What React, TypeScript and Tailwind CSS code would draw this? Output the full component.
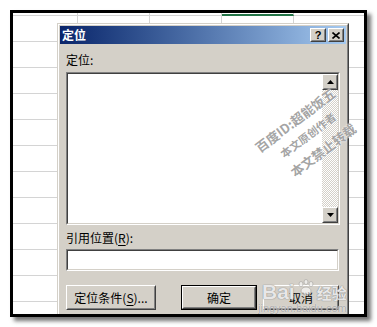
import React from 'react';

const FONT = '"Noto Sans CJK SC", "Noto Sans", sans-serif';

function Raised({ className = '', children }: { className?: string; children?: React.ReactNode }) {
  return (
    <div className={`border border-t-white border-l-white border-b-[#404040] border-r-[#404040] bg-[#d4d0c8] ${className}`}>
      <div className="w-full h-full border border-t-[#d4d0c8] border-l-[#d4d0c8] border-b-[#808080] border-r-[#808080] flex items-center justify-center">
        {children}
      </div>
    </div>
  );
}

function Sunken({ className = '', children }: { className?: string; children?: React.ReactNode }) {
  return (
    <div className={`border border-t-[#808080] border-l-[#808080] border-b-white border-r-white ${className}`}>
      <div className="w-full h-full border border-t-[#404040] border-l-[#404040] border-b-[#d4d0c8] border-r-[#d4d0c8] bg-white flex">
        {children}
      </div>
    </div>
  );
}

function Sheet() {
  const rows = Array.from({ length: 12 });
  const cols = [65, 72, 72, 72, 72];
  return (
    <div className="flex flex-col">
      {rows.map((_, r) => (
        <div key={r} className="flex">
          {cols.map((w, c) => {
            const sel = r === 0 && c === 3;
            return (
              <div
                key={c}
                style={{ width: w }}
                className={`${r === 0 ? 'h-[3px]' : 'h-[26px]'} shrink-0 border-r border-r-[#d4d4d4] ${
                  sel ? 'border-b-2 border-b-[#217346]' : 'border-b border-b-[#d4d4d4]'
                }`}
              />
            );
          })}
        </div>
      ))}
    </div>
  );
}

function Watermark() {
  const mark = 'absolute -translate-x-1/2 -translate-y-1/2 -rotate-[37deg] whitespace-nowrap font-bold leading-none';
  const glow = '[text-shadow:0_0_1px_#fff,0_0_2px_#fff]';
  return (
    <div className="absolute inset-0 pointer-events-none">
      <div className={`${mark} ${glow} left-[282px] top-[107px] text-[13px] text-[#8c8c8c]/80`}>百度ID:超能饭五</div>
      <div className={`${mark} ${glow} left-[295px] top-[122px] text-[11px] text-[#8c8c8c]/80`}>本文原创作者</div>
      <div className={`${mark} ${glow} left-[310px] top-[137px] text-[13px] text-[#8c8c8c]/80`}>本文禁止转载</div>

      <div className="absolute left-[249px] top-[266px] flex items-end gap-[2px]">
        <span className="text-[21px] leading-[22px] font-bold text-white/80 [text-shadow:0_0_1px_#888,0_0_1px_#888]" style={{ fontFamily: '"Liberation Sans", sans-serif' }}>
          Bai
        </span>
        <svg width="18" height="18" viewBox="0 0 18 18" className="mb-[6px] opacity-60">
          <ellipse cx="4" cy="5" rx="2" ry="2.5" fill="#fff" stroke="#999" strokeWidth="0.8" />
          <ellipse cx="9" cy="3" rx="2" ry="2.5" fill="#fff" stroke="#999" strokeWidth="0.8" />
          <ellipse cx="14" cy="5" rx="2" ry="2.5" fill="#fff" stroke="#999" strokeWidth="0.8" />
          <ellipse cx="9" cy="12" rx="5" ry="4" fill="#fff" stroke="#999" strokeWidth="0.8" />
        </svg>
        <span className="text-[15px] leading-[20px] font-bold text-white/80 [text-shadow:0_0_1px_#888,0_0_1px_#888]">经验</span>
      </div>
      <div className="absolute left-[245px] top-[289px] text-[11px] leading-[12px] text-[#999]/80 [text-shadow:0_0_1px_#fff]" style={{ fontFamily: '"Liberation Sans", sans-serif' }}>
        jingyan.baidu.com
      </div>
    </div>
  );
}

function ArrowUp() {
  return (
    <svg width="7" height="4" viewBox="0 0 7 4">
      <path d="M3.5 0 L7 4 L0 4 Z" fill="#000" />
    </svg>
  );
}

function ArrowDown() {
  return (
    <svg width="7" height="4" viewBox="0 0 7 4">
      <path d="M0 0 L7 0 L3.5 4 Z" fill="#000" />
    </svg>
  );
}

export default function App() {
  return (
    <div className="w-[377px] h-[327px] bg-white pt-[10px] pl-[10px]" style={{ fontFamily: FONT }}>
      <div className="relative w-[357px] h-[307px] border-[3px] border-black bg-white overflow-hidden shadow-[4px_4px_4px_rgba(0,0,0,0.55)]">
        <Sheet />

        {/* dialog */}
        <div className="absolute left-[44px] top-[10px] w-[292px] h-[300px] border border-t-[#d4d0c8] border-l-[#d4d0c8] border-b-[#404040] border-r-[#404040] bg-[#d4d0c8]">
          <div className="h-full border border-t-white border-l-white border-b-[#808080] border-r-[#808080] p-px flex flex-col">
            <div className="h-[18px] flex items-center bg-linear-to-r from-[#0a246a] to-[#a6caf0] pl-[2px] pr-[2px]">
              <span className="text-white font-bold text-[12px] leading-[14px]">定位</span>
              <div className="ml-auto flex gap-[2px]">
                <Raised className="w-[16px] h-[14px]">
                  <span className="text-[11px] leading-[11px] font-bold text-black" style={{ fontFamily: '"Liberation Sans", sans-serif' }}>?</span>
                </Raised>
                <Raised className="w-[16px] h-[14px]">
                  <svg width="8" height="7" viewBox="0 0 8 7">
                    <path d="M0.5 0.5 L7.5 6.5 M7.5 0.5 L0.5 6.5" stroke="#000" strokeWidth="1.6" />
                  </svg>
                </Raised>
              </div>
            </div>

            <div className="px-[6px] flex flex-col text-[12px] text-black">
              <div className="mt-[8px] h-[16px] leading-[16px]">定位:</div>
              <Sunken className="mt-[4px] h-[153px]">
                <div className="flex-1" />
                <div className="w-[16px] flex flex-col">
                  <Raised className="h-[16px] shrink-0">
                    <ArrowUp />
                  </Raised>
                  <div className="flex-1 bg-[repeating-conic-gradient(#d4d0c8_0_25%,#ffffff_0_50%)] bg-[length:2px_2px]" />
                  <Raised className="h-[16px] shrink-0">
                    <ArrowDown />
                  </Raised>
                </div>
              </Sunken>
              <div className="mt-[5px] h-[16px] leading-[16px]">
                引用位置(<span className="underline underline-offset-2">R</span>):
              </div>
              <Sunken className="mt-[3px] h-[22px] w-[273px]" />

              <div className="mt-[14px] flex">
                <Raised className="w-[90px] h-[25px]">
                  <span>
                    定位条件(<span className="underline underline-offset-2">S</span>)...
                  </span>
                </Raised>
                <div className="ml-[25px] w-[76px] h-[25px] border border-black">
                  <Raised className="w-full h-full">
                    <span>确定</span>
                  </Raised>
                </div>
                <Raised className="ml-[6px] w-[76px] h-[25px]">
                  <span>取消</span>
                </Raised>
              </div>
            </div>
          </div>
        </div>

        <Watermark />
      </div>
    </div>
  );
}
